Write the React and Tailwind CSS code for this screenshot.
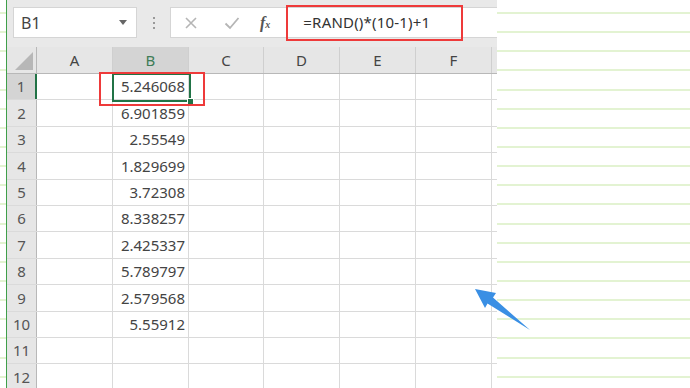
import React from 'react';

const cols = [
  { name: 'A', w: 'w-[76px]' },
  { name: 'B', w: 'w-[76px]' },
  { name: 'C', w: 'w-[75px]' },
  { name: 'D', w: 'w-[76px]' },
  { name: 'E', w: 'w-[76px]' },
  { name: 'F', w: 'w-[76px]' },
];

const values = [
  '5.246068', '6.901859', '2.55549', '1.829699', '3.72308',
  '8.338257', '2.425337', '5.789797', '2.579568', '5.55912', '', '',
];

const Lines = () => (
  <div className="flex flex-col pt-[12px]">
    {[...Array(20)].map((_, i) => (
      <div key={i} className="h-[19.15px] border-t-2 border-[#e3f3d2] shrink-0" />
    ))}
  </div>
);

const App = () => {
  return (
    <div
      className="relative w-[690px] h-[388px] overflow-hidden bg-white flex text-[#444]"
      style={{ fontFamily: '"Noto Sans", "Liberation Sans", sans-serif' }}
    >
      {/* left margin of the page behind */}
      <div className="w-[6px] shrink-0">
        <Lines />
      </div>
      <div className="w-[1px] shrink-0 bg-[#3f9f4a]" />

      {/* Excel sheet */}
      <div className="w-[490px] shrink-0 flex flex-col">
        {/* Toolbar */}
        <div className="h-[47px] shrink-0 bg-[#e9e9e9] flex items-start pt-[7px] pl-[6px]">
          <div className="w-[124px] h-[31px] bg-white border border-[#d5d5d5] flex items-center justify-between pl-[7px] pr-[9px]">
            <span className="text-[16px] text-[#444]">B1</span>
            <span className="w-0 h-0 border-l-[4px] border-r-[4px] border-t-[5px] border-l-transparent border-r-transparent border-t-[#666]" />
          </div>
          <div className="w-[33px] h-[31px] flex flex-col items-center justify-center gap-[3px]">
            <span className="w-[2px] h-[2px] bg-[#999]" />
            <span className="w-[2px] h-[2px] bg-[#999]" />
            <span className="w-[2px] h-[2px] bg-[#999]" />
          </div>
          <div className="flex-1 h-[31px] bg-white border-y border-l border-[#d5d5d5] flex items-center">
            <svg width="14" height="14" viewBox="0 0 14 14" className="ml-[13px]">
              <path d="M2 2 L12 12 M12 2 L2 12" stroke="#b5b5b5" strokeWidth="1.6" />
            </svg>
            <svg width="16" height="14" viewBox="0 0 16 14" className="ml-[26px]">
              <path d="M1.5 7.5 L6 12 L14.5 2" stroke="#b5b5b5" strokeWidth="1.8" fill="none" />
            </svg>
            <span
              className="ml-[20px] italic font-bold text-[16px] text-[#555] leading-none"
              style={{ fontFamily: '"Liberation Serif", serif' }}
            >
              f<span className="text-[10px]">x</span>
            </span>
            <span className="ml-[33px] text-[15px] text-[#333] tracking-[0.2px]">=RAND()*(10-1)+1</span>
          </div>
        </div>

        {/* Column header */}
        <div className="h-[27px] shrink-0 flex bg-[#e6e6e6] border-b border-[#b8b8b8]">
          <div className="w-[30px] shrink-0 relative border-r border-[#b8b8b8]">
            <svg width="20" height="20" viewBox="0 0 20 20" className="absolute right-[2px] bottom-[2px]">
              <path d="M19 1 L19 19 L1 19 Z" fill="#b7b7b7" />
            </svg>
          </div>
          {cols.map((c) => (
            <div
              key={c.name}
              className={`${c.w} shrink-0 flex items-center justify-center text-[15px] border-r border-[#cfcfcf] ${
                c.name === 'B' ? 'bg-[#d4d4d4] text-[#3e7c57]' : 'text-[#444]'
              }`}
            >
              {c.name}
            </div>
          ))}
          <div className="flex-1" />
        </div>

        {/* Rows */}
        {values.map((v, i) => (
          <div key={i} className="h-[26.4px] shrink-0 flex border-b border-[#dadada]">
            <div
              className={`w-[30px] shrink-0 flex items-center justify-center text-[15px] text-[#555] border-r ${
                i === 0 ? 'bg-[#d4d4d4] border-[#217346] border-r-2' : 'bg-[#e6e6e6] border-[#b8b8b8]'
              }`}
            >
              {i + 1}
            </div>
            {cols.map((c) => (
              <div
                key={c.name}
                className={`${c.w} shrink-0 border-r border-[#dadada] flex items-center justify-end pr-[3px] text-[15px]`}
              >
                {c.name === 'B' ? v : ''}
              </div>
            ))}
            <div className="flex-1" />
          </div>
        ))}
      </div>

      {/* right page lines */}
      <div className="flex-1">
        <Lines />
      </div>

      {/* selected cell */}
      <div className="absolute left-[112px] top-[73px] w-[79px] h-[29px] border-2 border-[#217346]" />
      <div className="absolute left-[187px] top-[98px] w-[7px] h-[7px] bg-[#217346] border border-white" />

      {/* red annotation boxes */}
      <div className="absolute left-[99px] top-[72px] w-[106px] h-[34px] border-2 border-[#ee3a3a]" />
      <div className="absolute left-[286px] top-[5px] w-[177px] h-[36px] border-2 border-[#ee3a3a]" />

      {/* blue arrow */}
      <svg width="66" height="52" viewBox="0 0 66 52" className="absolute left-[470px] top-[284px]">
        <polygon points="5,5 26,9 23,13.5 60,46 17.5,19.5 15,24" fill="#3a8fe4" />
      </svg>
    </div>
  );
};

export default App;
